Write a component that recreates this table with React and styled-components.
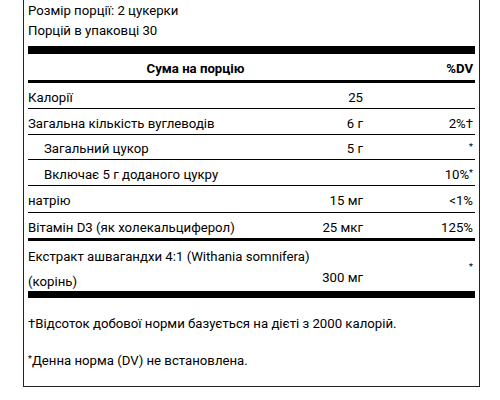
import React from "react";
import styled, { createGlobalStyle } from "styled-components";

const Global = createGlobalStyle`
  body {
    margin: 0;
    background: #ffffff;
    font-family: Roboto, "Liberation Sans", sans-serif;
    color: #000;
  }
`;

const rows = [
  { name: "Калорії", amount: "25", dv: "", h: 26 },
  { name: "Загальна кількість вуглеводів", amount: "6 г", dv: "2%†", h: 26 },
  { name: "Загальний цукор", amount: "5 г", dv: "*", indent: true, h: 25 },
  { name: "Включає 5 г доданого цукру", amount: "", dv: "10%*", indent: true, h: 26 },
  { name: "натрію", amount: "15 мг", dv: "<1%", h: 27 },
  { name: "Вітамін D3 (як холекальциферол)", amount: "25 мкг", dv: "125%", thick: true, h: 28 },
];

function App() {
  return (
    <Page>
      <Global />
      <Panel>
        <Serving>
          <div>Розмір порції: 2 цукерки</div>
          <div>Порцій в упаковці 30</div>
        </Serving>
        <Bar $h={8} />
        <Head>
          <HeadAmount>Сума на порцію</HeadAmount>
          <Dv>%DV</Dv>
        </Head>
        {rows.map((r) => (
          <Row key={r.name} $thick={r.thick} $h={r.h}>
            <Name $indent={r.indent}>{r.name}</Name>
            <Amount>{r.amount}</Amount>
            <Dv>{r.dv.endsWith("*") ? <>{r.dv.slice(0, -1)}<Star>*</Star></> : r.dv}</Dv>
          </Row>
        ))}
        <TallRow>
          <Name>
            Екстракт ашвагандхи 4:1 (Withania somnifera)
            <br />
            (корінь)
          </Name>
          <TallAmount>300 мг</TallAmount>
          <TallDv>
            <Star>*</Star>
          </TallDv>
        </TallRow>
        <Bar $h={7} />
        <Notes>
          <Note>†Відсоток добової норми базується на дієті з 2000 калорій.</Note>
          <Note>
            <Star>*</Star>Денна норма (DV) не встановлена.
          </Note>
        </Notes>
      </Panel>
    </Page>
  );
}

export default App;

const Page = styled.div`
  width: 500px;
  height: 400px;
  padding-left: 23px;
  box-sizing: border-box;
  overflow: hidden;
`;

const Panel = styled.div`
  width: 457px;
  box-sizing: border-box;
  border: 1px solid #222;
  border-top: none;
  padding: 1px 4px 0 4px;
  font-size: 13.2px;
`;

const Serving = styled.div`
  line-height: 20px;
  padding-bottom: 5px;
  height: 45px;
  box-sizing: border-box;
`;

const Bar = styled.div`
  height: ${(p) => p.$h}px;
  background: #000;
`;

const Head = styled.div`
  display: flex;
  align-items: flex-end;
  height: 29px;
  padding-bottom: 4px;
  box-sizing: border-box;
  font-weight: 700;
  border-bottom: 3px solid #000;
`;

const HeadAmount = styled.div`
  width: 335px;
  text-align: center;
`;

const Row = styled.div`
  display: flex;
  align-items: center;
  height: ${(p) => p.$h}px;
  box-sizing: border-box;
  border-bottom: ${(p) => (p.$thick ? "3px" : "1px")} solid #000;
  padding-top: 3px;
`;

const Name = styled.div`
  width: 255px;
  padding-left: ${(p) => (p.$indent ? 16 : 0)}px;
  box-sizing: border-box;
  white-space: nowrap;
`;

const Amount = styled.div`
  width: 80px;
  text-align: right;
`;

const Dv = styled.div`
  flex: 1;
  text-align: right;
  padding-right: 2px;
`;

const Star = styled.span`
  font-size: 9px;
  vertical-align: 3px;
`;

const TallRow = styled.div`
  display: flex;
  height: 50px;
  line-height: 25px;
  padding-top: 3px;
  box-sizing: border-box;
`;

const TallAmount = styled(Amount)`
  align-self: flex-end;
  padding-bottom: 1px;
`;

const TallDv = styled(Dv)`
  align-self: center;
`;

const Notes = styled.div`
  padding: 17px 0 16px;
  display: flex;
  flex-direction: column;
  gap: 17px;
  line-height: 18px;
`;

const Note = styled.div``;
